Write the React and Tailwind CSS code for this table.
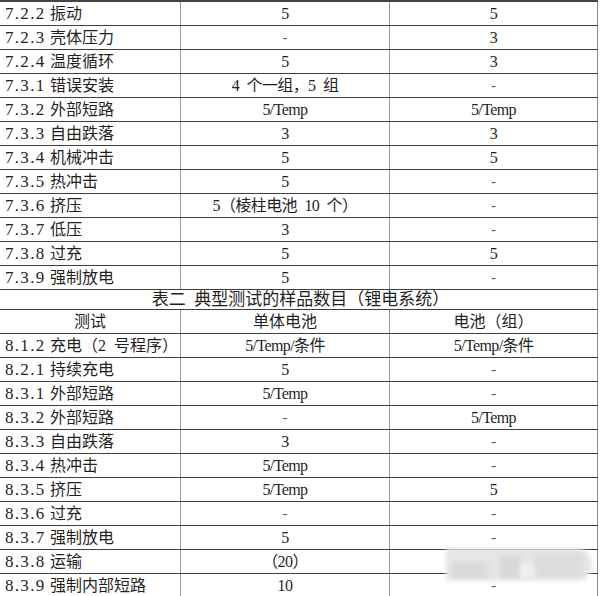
import React from 'react';

const sp = '\u2002';

const table1 = [
    ['7.2.2', '振动', '5', '5'],
    ['7.2.3', '壳体压力', '-', '3'],
    ['7.2.4', '温度循环', '5', '3'],
    ['7.3.1', '错误安装', `4${sp}个一组，5${sp}组`, '-'],
    ['7.3.2', '外部短路', '5/Temp', '5/Temp'],
    ['7.3.3', '自由跌落', '3', '3'],
    ['7.3.4', '机械冲击', '5', '5'],
    ['7.3.5', '热冲击', '5', '-'],
    ['7.3.6', '挤压', `5（棱柱电池${sp}10${sp}个）`, '-'],
    ['7.3.7', '低压', '3', '-'],
    ['7.3.8', '过充', '5', '5'],
    ['7.3.9', '强制放电', '5', '-'],
];

const table2 = [
    ['8.1.2', `充电（2${sp}号程序）`, '5/Temp/条件', '5/Temp/条件'],
    ['8.2.1', '持续充电', '5', '-'],
    ['8.3.1', '外部短路', '5/Temp', '-'],
    ['8.3.2', '外部短路', '-', '5/Temp'],
    ['8.3.3', '自由跌落', '3', '-'],
    ['8.3.4', '热冲击', '5/Temp', '-'],
    ['8.3.5', '挤压', '5/Temp', '5'],
    ['8.3.6', '过充', '-', '-'],
    ['8.3.7', '强制放电', '5', '-'],
    ['8.3.8', '运输', '（20）', '-'],
    ['8.3.9', '强制内部短路', '10', '-'],
];

const Value = ({ v }) => {
    if (v === '-') return <span className="text-[#555] text-[14px]">-</span>;
    return <span className="tracking-[-0.6px]">{v}</span>;
};

const Row = ({ num, name, b, c }) => (
    <div className="flex h-[24px] border-b border-[#3f3f3f]">
        <div className="w-[181px] flex items-center pl-[5px] border-r-[1.5px] border-[#9a9a9a]">
            <span className="inline-block w-[45px] text-[17px] tracking-[1.3px]">{num}</span>
            <span>{name}</span>
        </div>
        <div className="w-[209px] flex items-center justify-center border-r-[1.5px] border-[#9a9a9a]">
            <Value v={b} />
        </div>
        <div className="w-[208px] flex items-center justify-center border-r-[1.5px] border-[#8a8a8a]">
            <Value v={c} />
        </div>
    </div>
);

export default function App() {
    return (
        <div className="relative w-[603px] h-[596px] overflow-hidden bg-white text-[#1f1f1f] text-[16px] leading-none font-['Liberation_Serif','Noto_Sans_CJK_SC',serif]">
            <div className="w-[598px] border-t-2 border-[#444]">
                {table1.map((r) => (
                    <Row key={r[0]} num={r[0]} name={r[1]} b={r[2]} c={r[3]} />
                ))}
            </div>

            {/* 表二 标题 */}
            <div className="w-[598px] h-[20px] flex items-center justify-center text-[17px] border-b border-r-[1.5px] border-b-[#3f3f3f] border-r-[#8a8a8a] pl-[4px]">
                表二{sp}典型测试的样品数目（锂电系统）
            </div>

            <div className="w-[598px]">
                <div className="flex h-[24px] border-b border-[#3f3f3f]">
                    <div className="w-[181px] flex items-center justify-center border-r-[1.5px] border-[#9a9a9a]">测试</div>
                    <div className="w-[209px] flex items-center justify-center border-r-[1.5px] border-[#9a9a9a]">单体电池</div>
                    <div className="w-[208px] flex items-center justify-center border-r-[1.5px] border-[#8a8a8a]">电池（组）</div>
                </div>
                {table2.map((r) => (
                    <Row key={r[0]} num={r[0]} name={r[1]} b={r[2]} c={r[3]} />
                ))}
            </div>

            {/* 水印模糊区 */}
            <div className="absolute left-[446px] top-[548px] w-[146px] h-[33px] bg-[#e6e6e6] blur-[2px] rounded-r-2xl"></div>
            <div className="absolute left-[452px] top-[562px] w-[36px] h-[16px] bg-[#dadada] blur-[2px]"></div>
            <div className="absolute left-[500px] top-[556px] w-[20px] h-[22px] bg-[#d8d8d8] blur-[2px]"></div>
            <div className="absolute left-[535px] top-[553px] w-[48px] h-[24px] bg-[#dcdcdc] blur-[2px]"></div>
            <div className="absolute left-[520px] top-[565px] w-[14px] h-[12px] bg-[#f0f0f0] blur-[2px]"></div>
        </div>
    );
}
